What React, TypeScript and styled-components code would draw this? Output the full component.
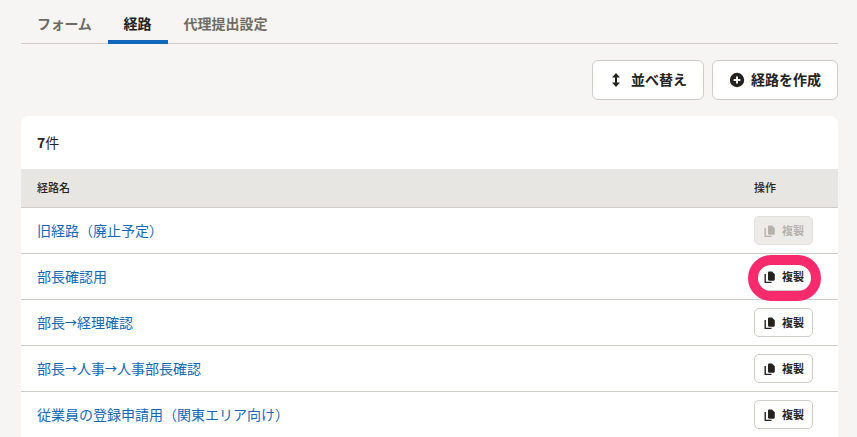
import React from "react";
import styled, { createGlobalStyle } from "styled-components";

const routes = [
  "旧経路（廃止予定）",
  "部長確認用",
  "部長→経理確認",
  "部長→人事→人事部長確認",
  "従業員の登録申請用（関東エリア向け）",
];

function SortIcon() {
  return (
    <svg width="16" height="16" viewBox="0 0 16 16" fill="currentColor">
      <path d="M7 1 11 5.4H8V10.6H11L7 15 3 10.6H6V5.4H3Z" />
    </svg>
  );
}

function PlusIcon() {
  return (
    <svg width="16" height="16" viewBox="0 0 16 16">
      <circle cx="8" cy="8" r="7.2" fill="currentColor" />
      <path d="M8 4.6V11.4M4.6 8H11.4" stroke="#fff" strokeWidth="2" />
    </svg>
  );
}

function CopyIcon() {
  return (
    <svg width="14" height="14" viewBox="0 0 14 14" fill="none">
      <path d="M2.2 4V12.4H8.5" stroke="currentColor" strokeWidth="1.4" />
      <path d="M5 2.6C5 2 5.5 1.5 6.1 1.5H9L11.8 4.2V9.6C11.8 10.2 11.3 10.7 10.7 10.7H6.1C5.5 10.7 5 10.2 5 9.6Z" fill="currentColor" />
    </svg>
  );
}

// the arrows in the route names are smaller than a full-width glyph
function RouteName({ name }: { name: string }) {
  const parts = name.split("→");
  return (
    <RouteLink>
      {parts.map((part, i) => (
        <React.Fragment key={i}>
          {i > 0 && <Arrow>→</Arrow>}
          {part}
        </React.Fragment>
      ))}
    </RouteLink>
  );
}

export default function App() {
  return (
    <>
      <GlobalStyle />
      <Page>
        <Tabs>
          <Tab $tight>フォーム</Tab>
          <Tab $active>経路</Tab>
          <Tab>代理提出設定</Tab>
        </Tabs>
        <Toolbar>
          <ActionButton>
            <SortIcon />
            <ButtonLabel>並べ替え</ButtonLabel>
          </ActionButton>
          <ActionButton>
            <PlusIcon />
            <ButtonLabel>経路を作成</ButtonLabel>
          </ActionButton>
        </Toolbar>
        <Card>
          <Count>
            <b>7</b>件
          </Count>
          <HeadRow>
            <span>経路名</span>
            <HeadAction>操作</HeadAction>
          </HeadRow>
          {routes.map((name, i) => (
            <Row key={name}>
              <RouteName name={name} />
              <CopyCell>
                <CopyButton disabled={i === 0}>
                  <CopyIcon />
                  <ButtonLabel>複製</ButtonLabel>
                </CopyButton>
                {i === 1 && <Ring />}
              </CopyCell>
            </Row>
          ))}
        </Card>
      </Page>
    </>
  );
}

const GlobalStyle = createGlobalStyle`
  html, body {
    margin: 0;
    height: 437px;
    overflow: hidden;
    background: #f6f5f3;
    font-family: "Noto Sans CJK JP", "Noto Sans", sans-serif;
    color: #23221f;
  }
`;

const Page = styled.div`
  padding: 0 19px 0 21px;
`;

const Tabs = styled.div`
  display: flex;
  height: 43px;
  border-bottom: 1px solid #cfccc8;
`;

const Tab = styled.div<{ $active?: boolean; $tight?: boolean }>`
  height: 44px;
  box-sizing: border-box;
  padding: 6px 16px 0;
  display: flex;
  align-items: center;
  font-size: 14px;
  font-weight: 700;
  letter-spacing: ${(p) => (p.$tight ? "-0.25px" : "0")};
  color: ${(p) => (p.$active ? "#23221f" : "#6e6b65")};
  border-bottom: 4px solid ${(p) => (p.$active ? "#1268b8" : "transparent")};
`;

const Toolbar = styled.div`
  display: flex;
  justify-content: flex-end;
  gap: 8px;
  padding: 16px 0;
`;

const ButtonLabel = styled.span`
  margin-top: -2px;
`;

const ActionButton = styled.button`
  display: flex;
  align-items: center;
  gap: 6px;
  height: 40px;
  padding: 0 16px;
  border: 1px solid #cfccc8;
  border-radius: 6px;
  background: #fff;
  font: 700 14px "Noto Sans CJK JP", sans-serif;
  color: #23221f;
`;

const Card = styled.div`
  background: #fff;
  border-radius: 8px 8px 0 0;
`;

const Count = styled.div`
  height: 53px;
  box-sizing: border-box;
  padding: 0 0 2px 16px;
  display: flex;
  align-items: center;
  font-size: 14px;
`;

const HeadRow = styled.div`
  height: 38px;
  display: flex;
  align-items: center;
  justify-content: space-between;
  padding: 0 25px 0 16px;
  background: #e8e6e2;
  border-bottom: 1px solid #cfccc8;
  font-size: 11px;
  font-weight: 500;
  & > span {
    margin-top: -2px;
  }
`;

const HeadAction = styled.span`
  width: 59px;
`;

const Row = styled.div`
  height: 45px;
  display: flex;
  align-items: center;
  justify-content: space-between;
  padding: 0 25px 0 16px;
  border-bottom: 1px solid #cfccc8;
`;

const RouteLink = styled.a`
  margin-top: -2px;
  font-size: 14px;
  color: #1268b8;
`;

const Arrow = styled.span`
  font-size: 12px;
  font-weight: 500;
`;

const CopyCell = styled.div`
  position: relative;
  display: flex;
`;

const CopyButton = styled.button`
  display: flex;
  align-items: center;
  gap: 5px;
  height: 29px;
  padding: 0 8px;
  border: 1px solid ${(p) => (p.disabled ? "#e3e1dd" : "#cfccc8")};
  border-radius: 5px;
  background: ${(p) => (p.disabled ? "#ecebe8" : "#fff")};
  color: ${(p) => (p.disabled ? "#b5b2ac" : "#23221f")};
  font: 700 11px "Noto Sans CJK JP", sans-serif;
`;

const Ring = styled.div`
  position: absolute;
  top: -7px;
  bottom: -10px;
  left: -6px;
  right: -8px;
  border: 10px solid #f72a6e;
  border-radius: 999px;
`;
